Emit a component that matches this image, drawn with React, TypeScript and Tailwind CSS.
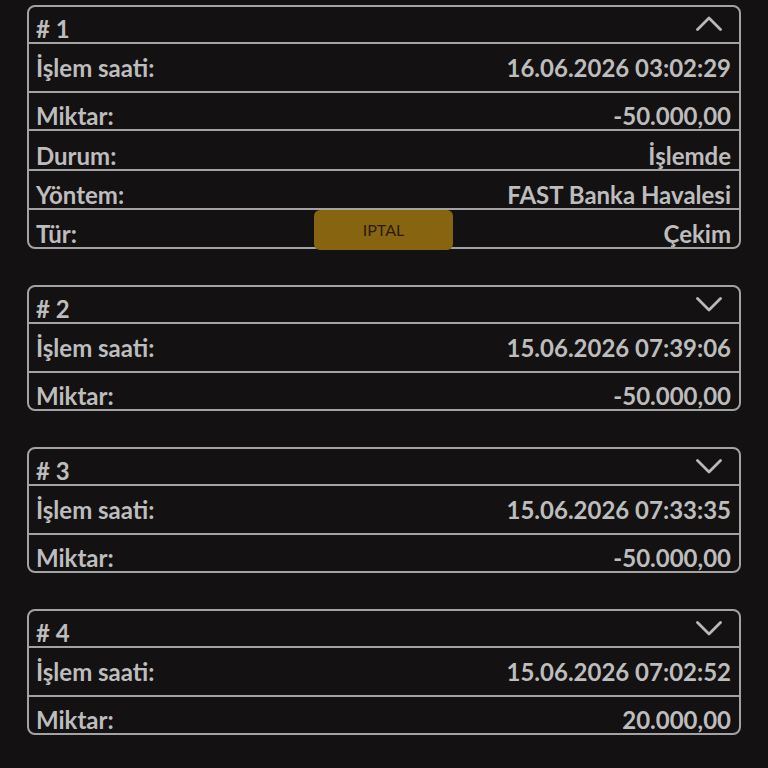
type Row = { label: string; value: string; h: string };

interface Tx {
  no: number;
  open: boolean;
  rows: Row[];
}

const txs: Tx[] = [
  {
    no: 1,
    open: true,
    rows: [
      { label: "İşlem saati:", value: "16.06.2026 03:02:29", h: "h-[49px] pb-[11px]" },
      { label: "Miktar:", value: "-50.000,00", h: "h-[38px] pb-[1px]" },
      { label: "Durum:", value: "İşlemde", h: "h-[40px] pb-[1px]" },
      { label: "Yöntem:", value: "FAST Banka Havalesi", h: "h-[39px] pb-[1px]" },
      { label: "Tür:", value: "Çekim", h: "h-[37px] pb-[1px]" },
    ],
  },
  {
    no: 2,
    open: false,
    rows: [
      { label: "İşlem saati:", value: "15.06.2026 07:39:06", h: "h-[49px] pb-[11px]" },
      { label: "Miktar:", value: "-50.000,00", h: "h-[36px] pb-[1px]" },
    ],
  },
  {
    no: 3,
    open: false,
    rows: [
      { label: "İşlem saati:", value: "15.06.2026 07:33:35", h: "h-[49px] pb-[11px]" },
      { label: "Miktar:", value: "-50.000,00", h: "h-[36px] pb-[1px]" },
    ],
  },
  {
    no: 4,
    open: false,
    rows: [
      { label: "İşlem saati:", value: "15.06.2026 07:02:52", h: "h-[49px] pb-[11px]" },
      { label: "Miktar:", value: "20.000,00", h: "h-[36px] pb-[1px]" },
    ],
  },
];

function Chevron({ up }: { up: boolean }) {
  return (
    <svg width="26" height="15" viewBox="0 0 26 15" fill="none" stroke="#b9b9b9" strokeWidth="2.8" strokeLinecap="round" strokeLinejoin="round">
      {up ? <polyline points="1.5,13.5 13,2 24.5,13.5" /> : <polyline points="1.5,1.5 13,13 24.5,1.5" />}
    </svg>
  );
}

function TxCard({ tx }: { tx: Tx }) {
  return (
    <div className="rounded-[8px] border-2 border-[#a3a3a3] bg-[#141112]">
      {/* header */}
      <div className="flex h-[37px] items-end justify-between border-b-2 border-[#a3a3a3] pb-[1px] pl-[7px] pr-[17px]">
        <span>
          # {tx.no}
        </span>
        <div className={tx.open ? "self-start pt-[9px]" : "self-start pt-[10px]"}>
          <Chevron up={tx.open} />
        </div>
      </div>
      {tx.rows.map((r, i) => (
        <div
          key={r.label}
          className={
            "flex items-end justify-between pl-[7px] pr-2 " +
            r.h +
            (i < tx.rows.length - 1 ? " border-b-2 border-[#a3a3a3]" : "")
          }
        >
          <span>{r.label}</span>
          <span>{r.value}</span>
        </div>
      ))}
    </div>
  );
}

export default function App() {
  return (
    <div
      className="relative min-h-[768px] bg-[#141112] px-[27px] pt-[5px] text-[24px] leading-none font-bold text-[#bdbdbd]"
      style={{ fontFamily: "Lato, 'Open Sans', sans-serif" }}
    >
      <div className="flex flex-col gap-[36px]">
        {txs.map((tx) => (
          <TxCard key={tx.no} tx={tx} />
        ))}
      </div>

      {/* cancel button floating over the first card */}
      <button className="absolute left-[314px] top-[210px] flex h-[40px] w-[139px] items-center justify-center rounded-[6px] bg-[#876510] text-[16px] font-normal text-[#2a1c08]">
        IPTAL
      </button>
    </div>
  );
}
